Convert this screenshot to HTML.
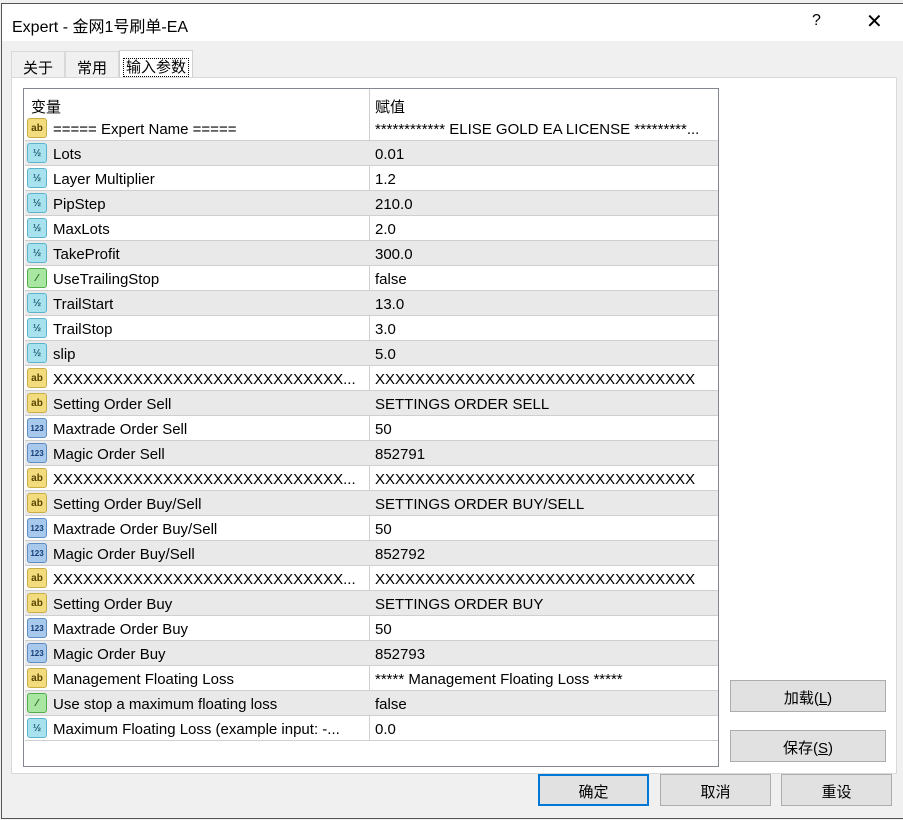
<!DOCTYPE html>
<html><head><meta charset="utf-8">
<style>
*{box-sizing:border-box;margin:0;padding:0}
body{width:903px;height:820px;background:#f0f0f0;position:relative;overflow:hidden;font-family:"Liberation Sans","Noto Sans CJK SC",sans-serif;font-size:15px;color:#000}
.win{position:absolute;left:1px;top:3px;width:902px;height:816px;border:1px solid #555;border-right:none;background:#f0f0f0}
.title{position:absolute;left:0;top:0;width:100%;height:37px;background:#fff}
.title span{position:absolute;left:10px;top:9px;font-size:16px}
.tab{position:absolute;top:51px;height:26px;font-size:15px;padding-top:5px;text-align:center;border:1px solid #d9d9d9;border-bottom:none;background:#f0f0f0}
.panel{position:absolute;left:11px;top:77px;width:886px;height:697px;background:#fff;border:1px solid #d9d9d9}
.tbl{position:absolute;left:23px;top:88px;width:696px;height:679px;border:1px solid #828790;background:#fff;overflow:hidden}
.row{position:absolute;left:1px;width:693px;height:25px;border-top:1px solid #cfcfcf;font-size:15px}
.row.g{background:#e9e9e9}
.row .n{position:absolute;left:28px;top:5px;white-space:nowrap}
.row .v{position:absolute;left:350px;top:5px;white-space:nowrap}
.row .ic{position:absolute;left:2px;top:2px;width:20px;height:20px;border-radius:3px;font-size:10px;font-weight:bold;text-align:center;line-height:19px}
.ab{background:#f2dc7e;border:1px solid #c9ad45;color:#5a4500}
.hf{background:#a8e2ef;border:1px solid #5bb4cc;color:#1b5c70}
.nu{background:#a9c9ec;border:1px solid #5d8ec4;color:#133f78;font-size:8px!important}
.bo{background:#a8e6a2;border:1px solid #52ae4a;color:#125c0f}
.vline{position:absolute;left:345px;top:0;width:1px;height:652px;background:#cfcfcf}
.btn{position:absolute;height:32px;background:#e1e1e1;border:1px solid #adadad;text-align:center;font-size:15px;padding-top:6px}
</style></head><body>
<div class="win">
<div class="title"><span>Expert - 金网1号刷单-EA</span>
<span style="left:810px;top:8px">?</span>
<span style="left:864px;top:5px;font-size:20px">✕</span></div>
</div>
<div class="tab" style="left:11px;width:54px">关于</div>
<div class="tab" style="left:65px;width:54px">常用</div>
<div class="tab" style="left:119px;top:50px;width:74px;height:28px;background:#fff;border-color:#d0d0d0"><span style="outline:1px dotted #000;padding:0 2px">输入参数</span></div>
<div class="panel"></div>
<div class="tbl">
<div class="vline"></div>
<div style="position:absolute;left:7px;top:7px">变量</div>
<div style="position:absolute;left:351px;top:7px">赋值</div>
<div class="row" style="top:27px;border-top:none"><div class="ic ab">ab</div><div class="n">===== Expert Name =====</div><div class="v">************ ELISE GOLD EA LICENSE *********...</div></div>
<div class="row g" style="top:51px"><div class="ic hf">½</div><div class="n">Lots</div><div class="v">0.01</div></div>
<div class="row" style="top:76px"><div class="ic hf">½</div><div class="n">Layer Multiplier</div><div class="v">1.2</div></div>
<div class="row g" style="top:101px"><div class="ic hf">½</div><div class="n">PipStep</div><div class="v">210.0</div></div>
<div class="row" style="top:126px"><div class="ic hf">½</div><div class="n">MaxLots</div><div class="v">2.0</div></div>
<div class="row g" style="top:151px"><div class="ic hf">½</div><div class="n">TakeProfit</div><div class="v">300.0</div></div>
<div class="row" style="top:176px"><div class="ic bo">⁄</div><div class="n">UseTrailingStop</div><div class="v">false</div></div>
<div class="row g" style="top:201px"><div class="ic hf">½</div><div class="n">TrailStart</div><div class="v">13.0</div></div>
<div class="row" style="top:226px"><div class="ic hf">½</div><div class="n">TrailStop</div><div class="v">3.0</div></div>
<div class="row g" style="top:251px"><div class="ic hf">½</div><div class="n">slip</div><div class="v">5.0</div></div>
<div class="row" style="top:276px"><div class="ic ab">ab</div><div class="n">XXXXXXXXXXXXXXXXXXXXXXXXXXXXX...</div><div class="v">XXXXXXXXXXXXXXXXXXXXXXXXXXXXXXXX</div></div>
<div class="row g" style="top:301px"><div class="ic ab">ab</div><div class="n">Setting Order Sell</div><div class="v">SETTINGS ORDER SELL</div></div>
<div class="row" style="top:326px"><div class="ic nu">123</div><div class="n">Maxtrade Order Sell</div><div class="v">50</div></div>
<div class="row g" style="top:351px"><div class="ic nu">123</div><div class="n">Magic Order Sell</div><div class="v">852791</div></div>
<div class="row" style="top:376px"><div class="ic ab">ab</div><div class="n">XXXXXXXXXXXXXXXXXXXXXXXXXXXXX...</div><div class="v">XXXXXXXXXXXXXXXXXXXXXXXXXXXXXXXX</div></div>
<div class="row g" style="top:401px"><div class="ic ab">ab</div><div class="n">Setting Order Buy/Sell</div><div class="v">SETTINGS ORDER BUY/SELL</div></div>
<div class="row" style="top:426px"><div class="ic nu">123</div><div class="n">Maxtrade Order Buy/Sell</div><div class="v">50</div></div>
<div class="row g" style="top:451px"><div class="ic nu">123</div><div class="n">Magic Order Buy/Sell</div><div class="v">852792</div></div>
<div class="row" style="top:476px"><div class="ic ab">ab</div><div class="n">XXXXXXXXXXXXXXXXXXXXXXXXXXXXX...</div><div class="v">XXXXXXXXXXXXXXXXXXXXXXXXXXXXXXXX</div></div>
<div class="row g" style="top:501px"><div class="ic ab">ab</div><div class="n">Setting Order Buy</div><div class="v">SETTINGS ORDER BUY</div></div>
<div class="row" style="top:526px"><div class="ic nu">123</div><div class="n">Maxtrade Order Buy</div><div class="v">50</div></div>
<div class="row g" style="top:551px"><div class="ic nu">123</div><div class="n">Magic Order Buy</div><div class="v">852793</div></div>
<div class="row" style="top:576px"><div class="ic ab">ab</div><div class="n">Management Floating Loss</div><div class="v">***** Management Floating Loss *****</div></div>
<div class="row g" style="top:601px"><div class="ic bo">⁄</div><div class="n">Use stop a maximum floating loss</div><div class="v">false</div></div>
<div class="row" style="top:626px;border-bottom:1px solid #cfcfcf;height:26px"><div class="ic hf">½</div><div class="n">Maximum Floating Loss (example input: -...</div><div class="v">0.0</div></div>
</div>
<div class="btn" style="left:730px;top:680px;width:156px">加载(<u>L</u>)</div>
<div class="btn" style="left:730px;top:730px;width:156px">保存(<u>S</u>)</div>
<div class="btn" style="left:538px;top:774px;width:111px;border:2px solid #0078d7;padding-top:5px">确定</div>
<div class="btn" style="left:660px;top:774px;width:111px">取消</div>
<div class="btn" style="left:781px;top:774px;width:111px">重设</div>
</body></html>
